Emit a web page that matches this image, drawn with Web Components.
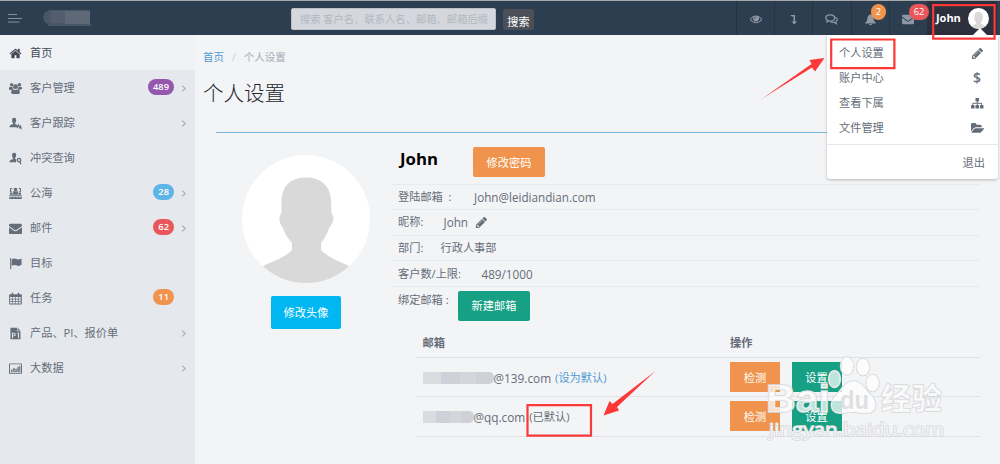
<!DOCTYPE html>
<html lang="zh-CN">

<head>
    <meta charset="UTF-8">
    <meta name="viewport" content="width=device-width, initial-scale=1.0">
    <title>个人设置</title>
    <style>
        :root {
            --bar: #2c3e50;
            --ink: #656d78;
            --orange: #f0944d;
            --green: #18a085;
            --red: #e9575a;
            --blue: #4f9bd4;
            --mark: #fc3838;
        }
        body {
            margin: 0;
            height: 464px;
            overflow: hidden;
            background: #f3f4f6;
            color: var(--ink);
            font: 11.2px/16px "Open Sans", "Noto Sans CJK SC", sans-serif;
        }
    </style>
</head>

<body>
    <crm-app></crm-app>

    <script>
        const icons = {
            home: '<path d="M1472 992v480q0 26-19 45t-45 19h-384v-384h-256v384h-384q-26 0-45-19t-19-45v-480l576-480 575 474zm223-69l-62 74q-8 9-21 11h-3q-13 0-21-7l-692-577-692 577q-12 8-24 7-13-2-21-11l-62-74q-8-10-7-23.5t11-21.5l719-599q32-26 76-26t76 26l244 204v-195q0-14 9-23t23-9h192q14 0 23 9t9 23v408l219 182q10 8 11 21.5t-7 23.5z"/>',
            mail: '<path d="M1792 710v794q0 66-47 113t-113 47h-1472q-66 0-113-47t-47-113v-794q44 49 101 87 362 246 497 345 57 42 92.5 65.5t94.5 48 110 24.5h2q51 0 110-24.5t94.5-48 92.5-65.5q170-123 498-345 57-39 100-87zm0-294q0 79-49 151t-122 123q-376 261-468 325-10 7-42.5 31t-54 38.5-52 32.5-57.5 27-50 9h-2q-23 0-50-9t-57.5-27-52-32.5-54-38.5-42.5-31q-91-64-262-182.5t-205-142.5q-62-42-117-115.5t-55-136.5q0-78 41.5-130t118.5-52h1472q65 0 112.5 47t47.5 113z"/>',
            pencil: '<path d="M491 1536l91-91-235-235-91 91v107h128v128h107zm523-928q0-22-22-22-10 0-17 7l-542 542q-7 7-7 17 0 22 22 22 10 0 17-7l542-542q7-7 7-17zm-54-192l416 416-832 832h-416v-416zm683 96q0 53-37 90l-166 166-416-416 166-165q36-38 90-38 53 0 91 38l235 234q37 39 37 91z"/>',
            eye: '<path d="M1664 960q-152-236-381-353 61 104 61 225 0 185-131.5 316.5t-316.5 131.5-316.5-131.5-131.5-316.5q0-121 61-225-229 117-381 353 133 205 333.5 326.5t434.5 121.5 434.5-121.5 333.5-326.5zm-720-384q0-20-14-34t-34-14q-125 0-214.5 89.5t-89.5 214.5q0 20 14 34t34 14 34-14 14-34q0-86 61-147t147-61q20 0 34-14t14-34zm848 384q0 34-20 69-140 230-376.5 368.5t-499.5 138.5-499.5-139-376.5-368q-20-35-20-69t20-69q140-229 376.5-368t499.5-139 499.5 139 376.5 368q20 35 20 69z"/>',
            tree: '<path d="M1792 1248v320q0 40-28 68t-68 28h-320q-40 0-68-28t-28-68v-320q0-40 28-68t68-28h96v-192h-512v192h96q40 0 68 28t28 68v320q0 40-28 68t-68 28h-320q-40 0-68-28t-28-68v-320q0-40 28-68t68-28h96v-192h-512v192h96q40 0 68 28t28 68v320q0 40-28 68t-68 28h-320q-40 0-68-28t-28-68v-320q0-40 28-68t68-28h96v-192q0-52 38-90t90-38h512v-192h-96q-40 0-68-28t-28-68v-320q0-40 28-68t68-28h320q40 0 68 28t28 68v320q0 40-28 68t-68 28h-96v192h512q52 0 90 38t38 90v192h96q40 0 68 28t28 68z"/>',
            folder: '<path d="M1879 952q0 31-31 66l-336 396q-43 51-120.5 86.5t-143.5 35.5h-1088q-34 0-60.5-13t-26.5-43q0-31 31-66l336-396q43-51 120.5-86.5t143.5-35.5h1088q34 0 60.5 13t26.5 43zm-343-344v160h-832q-94 0-197 47.5t-164 119.5l-337 396-5 6q0-4-.5-12.5t-.5-12.5v-960q0-92 66-158t158-66h320q92 0 158 66t66 158v32h544q92 0 158 66t66 158z"/>',
            down: '<path d="M400 150h750v1080h330l-450 480-450-480h320v-820h-300z"/>',
            bell: '<path d="M896 128q80 0 80 110 350 80 350 530 0 420 290 580v90h-1440v-90q290-160 290-580 0-450 350-530 0-110 80-110zM690 1500h412q-20 190-206 190t-206-190z"/>',
            chat: '<g fill="none" stroke="currentColor" stroke-width="170"><path d="M720 250c-340 0-610 180-610 430 0 150 100 260 230 340l-70 190 280-120c630 80 780-190 780-410 0-250-270-430-610-430z"/><path d="M1420 600c200 80 290 220 270 360-20 130-100 210-210 270l80 230-290-170c-180 20-390 10-520-80"/></g>',
            users: '<circle cx="360" cy="390" r="240"/><circle cx="1430" cy="390" r="240"/><circle cx="896" cy="640" r="340"/><path d="M0 1000V780q60-150 200-130 160 90 300 20 0 170 80 290-170 10-260 130H130Q0 1090 0 1000zM1792 1000V780q-60-150-200-130-160 90-300 20 0 170-80 290 170 10 260 130h-18q130 0 130-90zM300 1450q0-450 280-450 310 180 630 0 280 0 280 450 0 220-220 220H520q-220 0-220-220z"/>',
            track: '<path d="M700 100c280 0 330 230 280 460-30 130-80 210-130 260v140l350 170-60 300H80c0-280 60-330 480-480V820C430 720 420 560 420 400c0-180 110-300 280-300z"/><path fill="none" stroke="currentColor" stroke-width="160" d="M1020 1180l140 240 150-330 160 400 130-220 90 450"/>',
            query: '<path d="M700 100c280 0 330 230 280 460-30 130-80 210-130 260v140l150 80-30 390H80c0-280 60-330 480-480V820C430 720 420 560 420 400c0-180 110-300 280-300z"/><g fill="none" stroke="currentColor" stroke-width="170"><circle cx="1380" cy="1110" r="240"/><path d="M1510 1310l130 380"/></g>',
            sea: '<circle cx="896" cy="350" r="250"/><path d="M150 150h290v110H290v350h150v110H130zM1350 150h290v570h-290V610h150V260h-150zM560 600h670v470H560zM130 780h360v290H130zM1300 780h360v290h-360zM40 1130h1712v150H40zM40 1330l210 110 210-110 220 110 220-110 220 110 210-110 220 110 210-110v340H40z"/>',
            flag: '<path d="M130 170q90-80 170 0v1530H160V350q-80-70-30-180zM370 330q340-230 640-50 300 150 720-80v870q-380 260-720 80-300-150-640 70z"/>',
            calendar: '<path fill-rule="evenodd" d="M130 320h250V130q100-100 200 0v190h630V130q100-100 200 0v190h250q110 0 110 110v1190q0 110-110 110H130Q20 1730 20 1620V430q0-110 110-110zM140 700v230h300V700zm390 0v230h310V700zm400 0v230h310V700zm400 0v230h300V700zM140 1020v230h300v-230zm390 0v230h310v-230zm400 0v230h310v-230zm400 0v230h300v-230zM140 1340v260h300v-260zm390 0v260h310v-260zm400 0v260h310v-260zm400 0v260h300v-260z"/>',
            file: '<path fill-rule="evenodd" d="M200 100h900v500h480v1090H200zM1190 100l390 400h-390zM400 780v770h140v-260h170q220-20 220-260 0-230-230-250zm140 120h140q100 20 100 130t-100 140H540zM1090 780v130h140v640h140V780z"/>',
            chart: '<path fill-rule="evenodd" d="M130 190h1540q120 0 120 120v1190q0 120-120 120H130Q10 1620 10 1500V310q0-120 120-120zM140 320v1170h1520V320zM300 1050h190v330H300zM590 820h190v560H590zM880 930h190v450H880zM1160 650h190v730h-190zM1420 500h150v880h-150z"/>',
            caret: '<path fill="none" stroke="currentColor" stroke-width="290" d="M560 140l800 756-800 756"/>'
        };

        // attaches an open shadow root filled from a template
        function define(name, html) {
            const template = document.createElement('template');
            template.innerHTML = html;
            customElements.define(name, class extends HTMLElement {
                constructor() {
                    super();
                    this.attachShadow({ mode: 'open' });
                    this.shadowRoot.appendChild(template.content.cloneNode(true));
                }
            });
        }

        class CrmIcon extends HTMLElement {
            constructor() {
                super();
                this.attachShadow({ mode: 'open' });
            }
            connectedCallback() {
                const size = this.getAttribute('size') || 13;
                this.shadowRoot.innerHTML = `
                <style>
                  :host { display: inline-block; width: ${size}px; height: ${size}px; flex: none; }
                  svg { display: block; width: 100%; height: 100%; overflow: visible; fill: currentColor; }
                </style>
                <svg viewBox="0 0 1792 1792">${icons[this.getAttribute('name')]}</svg>`;
            }
        }
        customElements.define('crm-icon', CrmIcon);

        define('crm-badge', `
        <style>
          :host {
            display: block;
            box-sizing: border-box;
            height: 15.5px;
            padding: 0 5px;
            border-radius: 8px;
            background: var(--tone);
            color: #fff;
            font-size: 9.3px;
            font-weight: 600;
            line-height: 16px;
            text-align: center;
          }
        </style>
        <slot></slot>`);

        define('crm-button', `
        <style>
          :host {
            display: flex;
            align-items: center;
            justify-content: center;
            box-sizing: border-box;
            flex: none;
            width: 72px;
            height: 30px;
            padding-top: 1px;
            border-radius: 2px;
            background: var(--tone);
            color: #fff;
          }
          :host([flat]) { width: 50px; border-radius: 0; }
        </style>
        <slot></slot>`);

        class NavItem extends HTMLElement {
            constructor() {
                super();
                this.attachShadow({ mode: 'open' });
            }
            connectedCallback() {
                const badge = this.getAttribute('badge');
                this.shadowRoot.innerHTML = `
                <style>
                  :host { display: flex; align-items: center; box-sizing: border-box; height: 35px; padding: 1px 8px 0 9px; }
                  :host([active]) { background: #f0f2f5; color: #434a54; }
                  .label { flex: 1; padding-left: 8px; }
                  .caret { display: flex; width: 14px; justify-content: flex-end; color: #a9afb8; }
                  crm-badge { margin: -2px -1px 0 0; }
                </style>
                <crm-icon name="${this.getAttribute('icon')}"></crm-icon>
                <span class="label"><slot></slot></span>
                ${badge ? `<crm-badge style="--tone:${this.getAttribute('tone')}">${badge}</crm-badge>` : ''}
                <span class="caret">${this.hasAttribute('more') ? '<crm-icon name="caret" size="7"></crm-icon>' : ''}</span>`;
            }
        }
        customElements.define('nav-item', NavItem);

        define('side-nav', `
        <style>
          :host { display: block; background: #e5e9ee; }
        </style>
        <nav-item icon="home" active>首页</nav-item>
        <nav-item icon="users" badge="489" tone="#9556ad" more>客户管理</nav-item>
        <nav-item icon="track" more>客户跟踪</nav-item>
        <nav-item icon="query">冲突查询</nav-item>
        <nav-item icon="sea" badge="28" tone="#5fb4e7" more>公海</nav-item>
        <nav-item icon="mail" badge="62" tone="#e9575a" more>邮件</nav-item>
        <nav-item icon="flag">目标</nav-item>
        <nav-item icon="calendar" badge="11" tone="#f0944d" style="--pad:3px">任务</nav-item>
        <nav-item icon="file" more>产品、PI、报价单</nav-item>
        <nav-item icon="chart" more>大数据</nav-item>`);

        // grey head and shoulders on a white disc
        define('user-avatar', `
        <style>
          :host { display: block; border-radius: 50%; overflow: hidden; background: #fff; }
          svg { display: block; width: 100%; height: 100%; }
        </style>
        <svg viewBox="0 0 128 128"><path fill="#d9d9d9" d="M64 22.500C78 22.500 89 30 89 47L89.500 58C93 62 91.500 68 87 73C85 80 82 84 79 88V95C84 101 96 106 107 111L115 128H13L21 111C32 106 45 101 50 95V88C47 84 43 80 41 73C37 68 36 62 39.500 58V47C39.500 30 50 22.500 64 22.500Z"/></svg>`);

        define('top-bar', `
        <style>
          :host {
            display: grid;
            grid-template-columns: 291px 205px 7px 31px 1fr 261px 3px;
            box-sizing: border-box;
            height: 35px;
            border-top: 1px solid #a4a8a9;
            background: var(--bar);
          }
          .brand { display: flex; align-items: center; padding-left: 8px; gap: 21px; }
          .search {
            box-sizing: border-box;
            height: 22px;
            margin-top: 6.5px;
            padding-left: 8px;
            border: 1px solid #bcc1c8;
            border-radius: 2px;
            background: #d4d7dd;
            color: #b3b7bf;
            font-size: 10.3px;
            line-height: 21px;
            white-space: nowrap;
          }
          .go {
            height: 21px;
            margin-top: 8px;
            border-radius: 2px;
            background: #4b4f58;
            color: #fff;
            line-height: 25px;
            text-align: center;
          }
          .tools { display: grid; grid-template-columns: repeat(5, 38.2px) 1fr; }
          .tool {
            position: relative;
            display: flex;
            align-items: center;
            justify-content: center;
            border-left: 1px solid #243445;
            color: #8d98a4;
            padding-top: 2px;
          }
          .tool crm-badge { position: absolute; left: 19px; top: 3px; min-width: 15.5px; font-weight: 400; }
          .tool:last-of-type crm-icon { margin-right: -1px; }
          .me {
            display: flex;
            align-items: center;
            justify-content: space-between;
            padding: 0 8px 0 9px;
            background: #2b303c;
            color: #fff;
            font-weight: 700;
            font-size: 11px;
          }
          user-avatar { width: 21px; height: 21px; }
        </style>
        <div class="brand">
          <svg width="14" height="10" stroke="#8390a0"><path d="M0 1.500h9M0 5.500h14M0 9h11.500"/></svg>
          <svg width="48" height="18"><path fill="#495769" d="M8 1H47V15H48V17H5V15Q0 13 0 8Q1 2 8 1"/><path fill="#525e6e" d="M8 2h14v12H8z"/><path fill="#5e6877" d="M22 2h25v13H22z"/></svg>
        </div>
        <div class="search">搜索 客户名、联系人名、邮箱、邮箱后缀</div>
        <span></span>
        <div class="go">搜索</div>
        <span></span>
        <div class="tools">
          <div class="tool"><crm-icon name="eye" size="12"></crm-icon></div>
          <div class="tool"><crm-icon name="down" size="11"></crm-icon></div>
          <div class="tool"><crm-icon name="chat" size="13"></crm-icon></div>
          <div class="tool"><crm-icon name="bell" size="13"></crm-icon><crm-badge style="--tone:var(--orange)">2</crm-badge></div>
          <div class="tool"><crm-icon name="mail" size="12"></crm-icon><crm-badge style="--tone:var(--red)">62</crm-badge></div>
          <div class="me"><span>John</span><user-avatar></user-avatar></div>
        </div>`);

        define('menu-item', `
        <style>
          :host { display: flex; align-items: center; justify-content: space-between; height: 24.9px; padding: 0 14px 0 12.5px; }
        </style>
        <slot></slot><slot name="icon"></slot>`);

        define('user-menu', `
        <style>
          :host {
            display: block;
            box-sizing: border-box;
            width: 171px;
            height: 144px;
            padding-top: 6px;
            border-radius: 0 0 3px 3px;
            background: #fff;
            box-shadow: 0 1px 3px rgba(0, 0, 0, .25);
          }
          hr { height: 1px; margin: 3px 0 6px; border: 0; background: #e5e6e9; }
          .out { padding-right: 12.5px; text-align: right; line-height: 24px; }
          b { width: 13px; font-size: 14px; font-weight: 600; text-align: center; }
          .tip {
            position: absolute;
            right: 11px;
            top: -7px;
            border: 7px solid transparent;
            border-top: 0;
            border-bottom-color: #fff;
          }
        </style>
        <i class="tip"></i>
        <menu-item>个人设置<crm-icon slot="icon" name="pencil"></crm-icon></menu-item>
        <menu-item>账户中心<b slot="icon">$</b></menu-item>
        <menu-item>查看下属<crm-icon slot="icon" name="tree" size="12.5"></crm-icon></menu-item>
        <menu-item>文件管理<crm-icon slot="icon" name="folder" size="12.5"></crm-icon></menu-item>
        <hr>
        <div class="out">退出</div>`);

        define('info-row', `
        <style>
          :host {
            display: flex;
            align-items: center;
            box-sizing: border-box;
            height: 25.6px;
            padding-left: 7px;
            border-top: 1px solid #e9eaed;
          }
          .label { width: var(--label); white-space: pre; }
          .value { display: flex; align-items: center; gap: 7px; font-size: var(--size, 11.7px); }
        </style>
        <span class="label"><slot name="label"></slot></span>
        <span class="value"><slot></slot></span>`);

        define('mail-row', `
        <style>
          :host {
            display: grid;
            grid-template-columns: 296px 50px 50px;
            column-gap: 11.5px;
            align-items: center;
            box-sizing: border-box;
            height: 39.4px;
            padding-left: 7px;
            border-top: 1.5px solid #dfe1e5;
          }
          :host([head]) { height: 28px; border: 0; font-weight: 700; }
          .addr { display: flex; align-items: center; padding-top: 1px; }
          slot { white-space: nowrap; }
        </style>
        <span class="addr"><slot></slot></span><slot name="a"></slot><slot name="b"></slot>`);

        define('profile-page', `
        <style>
          :host { display: block; padding: 14px 20px 0 8px; }
          .crumbs { display: flex; gap: 8px; font-size: 10.5px; color: #a6abb5; }
          .crumbs a, .link { color: var(--blue); }
          .crumbs i { color: #c9cdd3; font-style: normal; }
          h1 { margin: 13px 0 0; font-size: 20.500px; font-weight: 300; line-height: 30px; color: #23272e; }
          .body {
            display: grid;
            grid-template-columns: 175px 589px;
            width: 764px;
            margin: 24px 0 0 13px;
            border-top: 1.5px solid #7bb8e2;
          }
          .photo { display: flex; flex-direction: column; align-items: center; width: 180px; padding-top: 22px; gap: 13px; }
          .photo user-avatar { width: 128px; height: 128px; }
          .photo crm-button { width: 70px; height: 33px; --tone: #00b7f1; }
          .name { display: flex; align-items: center; height: 50.500px; padding-left: 9px; color: #000; }
          .name b { width: 73px; font-size: 16.800px; margin-top: 1px; }
          .name crm-button { margin-top: 8px; --tone: var(--orange); }
          .bind { display: flex; box-sizing: border-box; height: 43px; padding: 4px 0 0 7px; border-top: 1px solid #e9eaed; }
          .bind span { width: 60px; padding-top: 1px; white-space: nowrap; }
          .bind crm-button { --tone: var(--green); }
          .mails { margin-left: 24.500px; border-bottom: 1px solid #dfe1e5; }
          .addr { font-size: 11.800px; }
          .blot { flex: none; height: 12px; border-radius: 0 5px 5px 0; background: linear-gradient(90deg, #d9dbdf 25%, #ced1d7 25% 52%, #d4d6dc 52% 75%, #cfd1d7 75%); }
          .link { margin-left: 4px; }
        </style>
        <div class="crumbs"><a>首页</a><i>/</i><span>个人设置</span></div>
        <h1>个人设置</h1>
        <div class="body">
          <div class="photo"><user-avatar></user-avatar><crm-button>修改头像</crm-button></div>
          <div>
            <div class="name"><b>John</b><crm-button>修改密码</crm-button></div>
            <info-row style="--label:76px"><span slot="label">登陆邮箱  :</span>John@leidiandian.com</info-row>
            <info-row style="--label:45.500px"><span slot="label">昵称:</span>John<crm-icon name="pencil" size="13"></crm-icon></info-row>
            <info-row style="--label:42.500px;--size:11.200px"><span slot="label">部门:</span>行政人事部</info-row>
            <info-row style="--label:83.500px"><span slot="label">客户数/上限:</span>489/1000</info-row>
            <div class="bind"><span>绑定邮箱 :</span><crm-button>新建邮箱</crm-button></div>
            <div class="mails">
              <mail-row head>邮箱<span slot="a">操作</span></mail-row>
              <mail-row>
                <i class="blot" style="width:71px"></i><span class="addr">@139.com</span><span class="link">(设为默认)</span>
                <crm-button flat slot="a" style="--tone:var(--orange)">检测</crm-button>
                <crm-button flat slot="b" style="--tone:var(--green)">设置</crm-button>
              </mail-row>
              <mail-row>
                <i class="blot" style="width:51px"></i><span class="addr">@qq.com</span><span style="margin-left:4px">(已默认)</span>
                <crm-button flat slot="a" style="--tone:var(--orange)">检测</crm-button>
                <crm-button flat slot="b" style="--tone:var(--green)">设置</crm-button>
              </mail-row>
            </div>
          </div>
        </div>`);

        // red boxes and arrows drawn over the page, plus the site watermark
        define('page-marks', `
        <style>
          :host { display: block; pointer-events: none; }
          svg { display: block; }
          .wm { fill: #fff; fill-opacity: .72; stroke: #d6d8da; stroke-width: 1.5px; paint-order: stroke; }
          .latin { font-family: "Liberation Sans", sans-serif; font-weight: 700; }
        </style>
        <svg width="1000" height="464">
          <g class="wm">
            <ellipse cx="834.500" cy="379" rx="6" ry="8.500"/>
            <ellipse cx="847" cy="366" rx="6.500" ry="9"/>
            <ellipse cx="863" cy="367" rx="6.500" ry="8.500"/>
            <ellipse cx="872.500" cy="383" rx="6.500" ry="8.500"/>
            <path d="M854 381c8 0 11 9 17 14 8 8 5 18-3 18-6 1-9-1-15-1s-9 2-15 1c-8-1-9-11-2-18 5-5 9-14 18-14z"/>
            <text class="latin" x="766" y="412" font-size="39" textLength="64" lengthAdjust="spacingAndGlyphs">Bai</text>
            <text class="latin" x="840" y="409" font-size="25" textLength="29" lengthAdjust="spacingAndGlyphs" style="fill:#d3d6d8;stroke:none">du</text>
            <text x="881" y="409" font-size="30" font-weight="700" textLength="61">经验</text>
            <text x="769" y="436" font-size="18.500" textLength="175" lengthAdjust="spacingAndGlyphs">jingyan.baidu.com</text>
          </g>
          <g fill="none" stroke="var(--mark)" stroke-width="2.200">
            <path d="M933.200 5.200h61.400v33.400h-61.400zM831.200 39.500h63.200v28.700h-63.200zM527.500 405.200h63.500v30.500h-63.500z"/>
          </g>
          <path fill="var(--mark)" d="M761.500 99L812 67.500L815 71.500L824.500 58L809.500 60L811.500 64Z"/>
          <path fill="var(--mark)" d="M655.500 371L617 407L619 410.500L603.500 415.500L609.500 401L612.500 404Z"/>
        </svg>`);

        define('crm-app', `
        <style>
          :host { display: block; position: relative; height: 464px; }
          .cols { display: grid; grid-template-columns: 195px 1fr; height: 429px; }
          user-menu { position: absolute; left: 826.500px; top: 35px; }
          page-marks { position: absolute; left: 0; top: 0; }
        </style>
        <top-bar></top-bar>
        <div class="cols">
          <side-nav></side-nav>
          <profile-page></profile-page>
        </div>
        <user-menu></user-menu>
        <page-marks></page-marks>`);
    </script>
</body>

</html>
